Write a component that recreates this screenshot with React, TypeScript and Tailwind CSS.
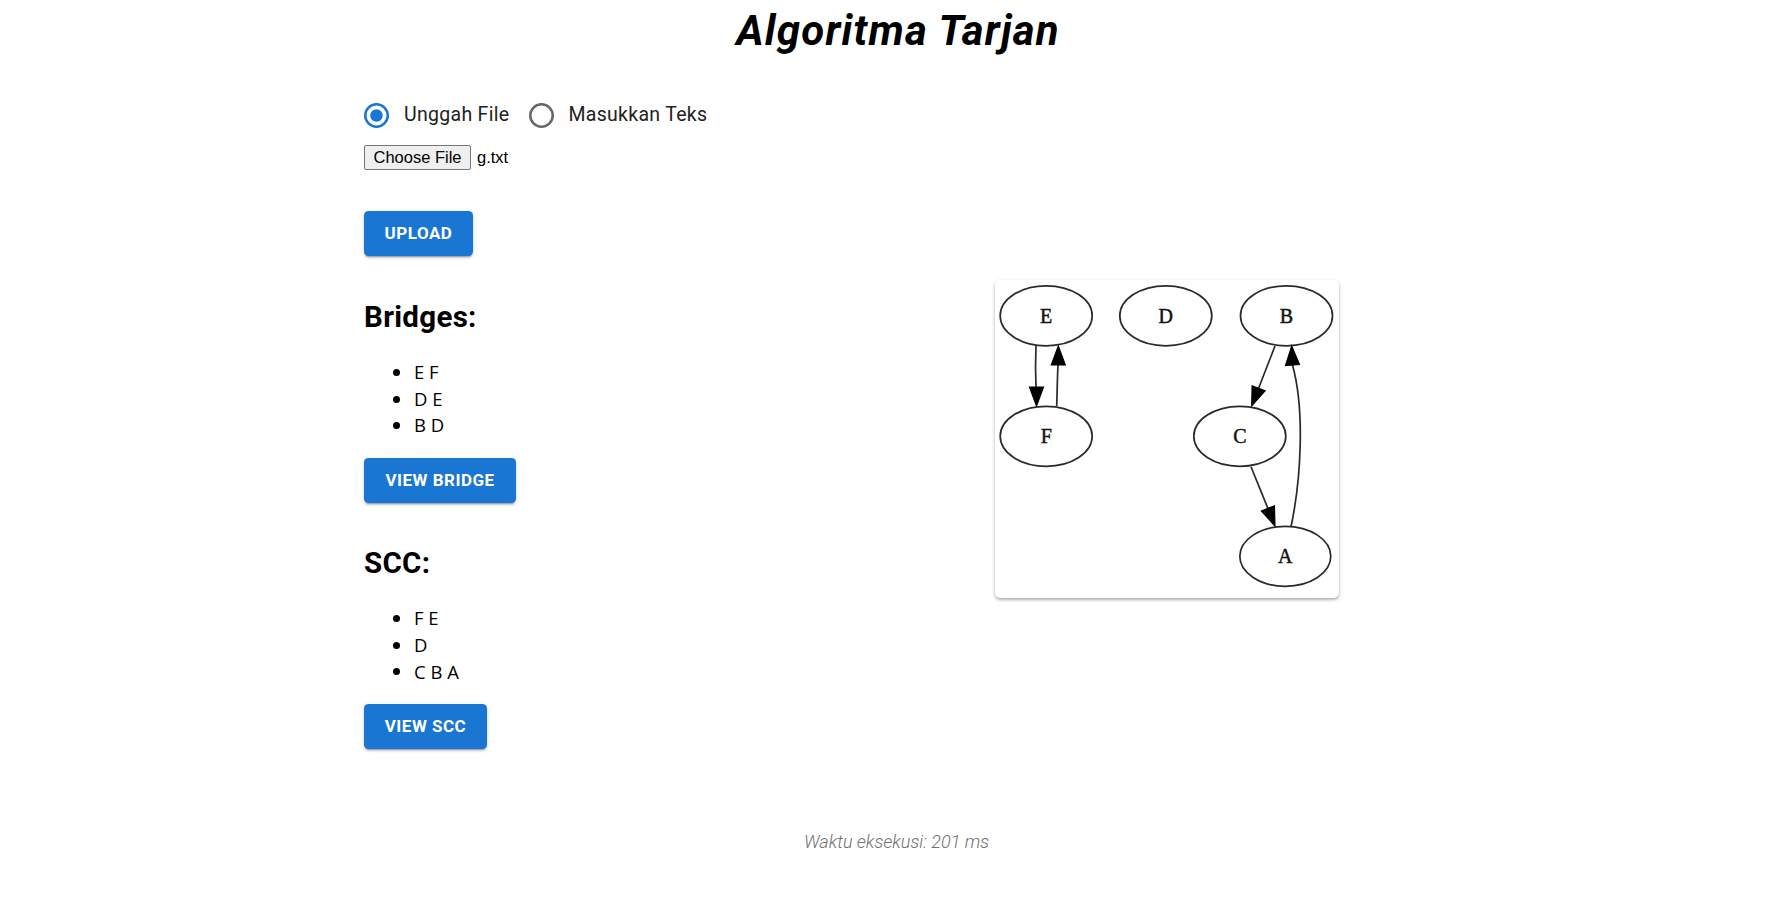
import React from "react";

const Radio = ({ checked }: { checked: boolean }) => (
  <svg width="25" height="25" viewBox="0 0 25 25" className="shrink-0">
    <circle
      cx="12.5"
      cy="12.5"
      r="11.25"
      fill="none"
      stroke={checked ? "#1976d2" : "#666666"}
      strokeWidth="2.5"
    />
    {checked && <circle cx="12.5" cy="12.5" r="6.25" fill="#1976d2" />}
  </svg>
);

const Bullets = ({ items }: { items: string[] }) => (
  <ul className="font-['Open_Sans',sans-serif] text-[18.5px] leading-[26.7px] text-black">
    {items.map((item) => (
      <li key={item} className="flex items-center">
        <span className="ml-[29px] h-[7px] w-[7px] rounded-full bg-black" />
        <span className="ml-[14px]">{item}</span>
      </li>
    ))}
  </ul>
);

const Btn = ({ label, w, className }: { label: string; w: string; className?: string }) => (
  <button
    className={`${w} ${className} flex h-[45px] items-center justify-center rounded-[4.5px] bg-[#1976d2] text-[17px] font-bold uppercase tracking-[0.5px] text-white shadow-[0_3px_1px_-2px_rgba(0,0,0,0.2),0_2px_2px_0_rgba(0,0,0,0.14),0_1px_5px_0_rgba(0,0,0,0.12)]`}
  >
    {label}
  </button>
);

const Graph = () => (
  <svg width="344" height="318" viewBox="5 10 344 318">
    <g fill="none" stroke="#2a2a2a" strokeWidth="1.7">
      <ellipse cx="56.2" cy="45.8" rx="46" ry="30" />
      <ellipse cx="175.8" cy="45.8" rx="46" ry="30" />
      <ellipse cx="296.5" cy="45.8" rx="46" ry="30" />
      <ellipse cx="56.2" cy="166.3" rx="46" ry="30" />
      <ellipse cx="249.8" cy="166.3" rx="46" ry="30" />
      <ellipse cx="295.3" cy="286.3" rx="45.5" ry="30" />
      <path d="M46,76 C45.4,90 45.4,104 46,117" />
      <path d="M66.7,136 C67.2,122 67.3,108 68,95" />
      <path d="M285,76 L268.6,118.3" />
      <path d="M261,196.7 L277.9,238.4" />
      <path d="M301,256.7 C311,210 315,140 302.5,95" />
    </g>
    <g fill="#000" stroke="#000" strokeWidth="1.2">
      <polygon points="46.5,136 39.5,117 53.5,117" />
      <polygon points="68.3,76 61.3,95 75.3,95" />
      <polygon points="261.7,136 262.1,115.8 275.1,120.8" />
      <polygon points="285,256 271.4,241 284.4,235.8" />
      <polygon points="301.7,76 295.5,95.5 309.5,94.5" />
    </g>
    <g
      fontFamily="'Liberation Serif', serif"
      fontSize="20"
      textAnchor="middle"
      dominantBaseline="central"
      fill="#111"
      stroke="#111"
      strokeWidth="0.45"
    >
      <text x="56.2" y="45.8">E</text>
      <text x="175.8" y="45.8">D</text>
      <text x="296.5" y="45.8">B</text>
      <text x="56.2" y="166.3">F</text>
      <text x="249.8" y="166.3">C</text>
      <text x="295.3" y="286.3">A</text>
    </g>
  </svg>
);

export default function App() {
  return (
    <div className="min-h-screen bg-white font-['Roboto',sans-serif] text-black">
      <h1 className="pl-[8px] pt-[6px] text-center text-[42px] font-bold italic leading-[50px] tracking-[1.2px]">
        Algoritma Tarjan
      </h1>

      <div className="ml-[364px] mt-[38px] flex items-start">
        <div className="w-[631px]">
          <div className="flex h-[42px] items-center text-[19.5px] tracking-[0.3px] text-[#212121]">
            <Radio checked />
            <span className="ml-[15px]">Unggah File</span>
            <span className="ml-[20px]">
              <Radio checked={false} />
            </span>
            <span className="ml-[14px]">Masukkan Teks</span>
          </div>

          <div className="mt-[9px] flex h-[25px] items-center font-['Liberation_Sans',Arial,sans-serif] text-[16.5px]">
            <span className="flex h-[25px] w-[107px] items-center justify-center rounded-[2px] border border-[#767676] bg-[#efefef]">
              Choose File
            </span>
            <span className="ml-[6px]">g.txt</span>
          </div>

          <Btn label="Upload" w="w-[109px]" className="mt-[41px]" />

          <h2 className="mt-[45px] text-[29.5px] font-bold leading-[32px] tracking-[0.3px]">Bridges:</h2>
          <div className="mt-[26px]">
            <Bullets items={["E F", "D E", "B D"]} />
          </div>
          <Btn label="View Bridge" w="w-[152px]" className="mt-[19px]" />

          <h2 className="mt-[44px] text-[29.5px] font-bold leading-[32px] tracking-[0.3px]">SCC:</h2>
          <div className="mt-[26px]">
            <Bullets items={["F E", "D", "C B A"]} />
          </div>
          <Btn label="View SCC" w="w-[123px]" className="mt-[19px]" />
        </div>

        <div className="mt-[186px] rounded-[5px] bg-white shadow-[0_2px_3px_0_rgba(0,0,0,0.25),0_1px_4px_0_rgba(0,0,0,0.1)]">
          <Graph />
        </div>
      </div>

      <p className="mt-[81px] pl-[5px] text-center text-[18px] font-light italic leading-[24px] text-[#707070]">
        Waktu eksekusi: 201 ms
      </p>
    </div>
  );
}
